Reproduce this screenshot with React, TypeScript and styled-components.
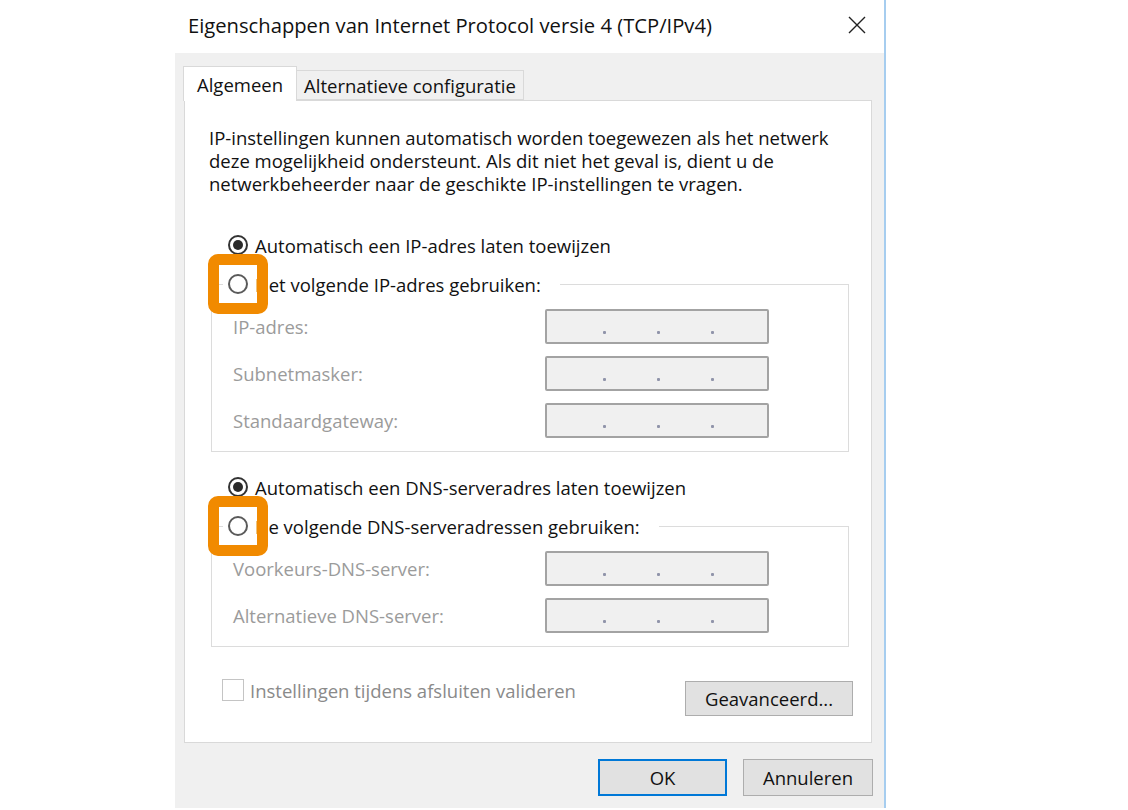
import React from "react";
import styled, { createGlobalStyle } from "styled-components";

const Global = createGlobalStyle`
  html, body { margin: 0; padding: 0; background: #ffffff; }
  body { font-family: "Open Sans", "Noto Sans", sans-serif; color: #111; }
  * { box-sizing: border-box; }
`;

const Page = styled.div`
  width: 1128px;
  height: 810px;
  display: flex;
  padding-left: 175px;
  overflow: hidden;
`;

const Dialog = styled.div`
  width: 711px;
  height: 808px;
  background: #f0f0f0;
  border-right: 2px solid #a6cdef;
  display: flex;
  flex-direction: column;
`;

const TitleBar = styled.div`
  height: 53px;
  flex: none;
  background: #ffffff;
  display: flex;
  align-items: center;
  justify-content: space-between;
  padding: 0 18px 3px 13px;
`;

const Title = styled.div`
  font-size: 20.2px;
  color: #111;
  white-space: nowrap;
`;

const CloseIcon = styled.svg`
  width: 18px;
  height: 18px;
  display: block;
`;

const Body = styled.div`
  padding: 13px 12px 0 9px;
  display: flex;
  flex-direction: column;
`;

const TabRow = styled.div`
  display: flex;
  align-items: flex-end;
  height: 34px;
  margin-left: -1px;
  position: relative;
  z-index: 1;
`;

const Tab = styled.div<{ $active?: boolean }>`
  height: ${(p) => (p.$active ? "35px" : "30px")};
  margin-bottom: ${(p) => (p.$active ? "-1px" : "0")};
  margin-left: ${(p) => (p.$active ? "0" : "-1px")};
  padding: 0 ${(p) => (p.$active ? "13px" : "7px")};
  background: ${(p) => (p.$active ? "#ffffff" : "#f0f0f0")};
  border: 1px solid #d9d9d9;
  border-bottom: ${(p) => (p.$active ? "none" : "1px solid #d9d9d9")};
  display: flex;
  align-items: center;
  font-size: 18.5px;
  white-space: nowrap;
  color: #111;
`;

const Panel = styled.div`
  height: 643px;
  background: #ffffff;
  border: 1px solid #d9d9d9;
  padding: 25px 18px 0 24px;
  display: flex;
  flex-direction: column;
`;

const Description = styled.p`
  margin: 0;
  font-size: 18.5px;
  line-height: 23px;
  white-space: nowrap;
  color: #111;
`;

const RadioRow = styled.label<{ $gap?: number }>`
  display: flex;
  align-items: center;
  height: 22px;
  margin-left: 19px;
  margin-top: ${(p) => p.$gap ?? 0}px;
  font-size: 18.5px;
  white-space: nowrap;
  color: #111;
`;

const RadioMark = styled.span<{ $checked?: boolean }>`
  position: relative;
  flex: none;
  width: 20px;
  height: 20px;
  margin-right: 7px;
  border-radius: 50%;
  border: 2px solid ${(p) => (p.$checked ? "#333" : "#5a5a5a")};
  background: #fff;
  display: flex;
  align-items: center;
  justify-content: center;
  &::after {
    content: "";
    display: ${(p) => (p.$checked ? "block" : "none")};
    width: 10px;
    height: 10px;
    border-radius: 50%;
    background: #2a2a2a;
  }
`;

const Highlight = styled.span`
  position: absolute;
  left: -22px;
  top: -22px;
  width: 60px;
  height: 60px;
  border: 11px solid #f18a00;
  border-radius: 10px;
  pointer-events: none;
`;

const GroupBox = styled.fieldset`
  margin: 17px 4px 0 2px;
  padding: 14px 0 13px 21px;
  border: 1px solid #dcdcdc;
  min-width: 0;
`;

const Legend = styled.legend`
  margin-left: -10px;
  padding: 0 19px 0 5px;
  height: 22px;
`;

const LegendRow = styled.span`
  display: flex;
  align-items: center;
  height: 22px;
  font-size: 18.5px;
  white-space: nowrap;
  color: #111;
`;

const FieldGrid = styled.div`
  display: grid;
  grid-template-columns: 312px 224px;
  grid-auto-rows: 35px;
  row-gap: 12px;
  align-items: center;
`;

const FieldLabel = styled.span`
  font-size: 18.5px;
  color: #9b9b9b;
  white-space: nowrap;
`;

const IpBox = styled.div`
  height: 35px;
  width: 224px;
  background: #f0f0f0;
  border: 2px solid #a3a3a3;
  border-radius: 2px;
  display: flex;
  align-items: center;
  padding-left: 56px;
  gap: 51px;
`;

const Dot = styled.span`
  width: 3px;
  height: 3px;
  margin-top: 11px;
  background: #9094aa;
  border-radius: 1px;
`;

const BottomRow = styled.div`
  margin-top: 33px;
  display: flex;
  justify-content: space-between;
  align-items: flex-start;
  padding-left: 13px;
`;

const CheckLabel = styled.label`
  display: flex;
  align-items: center;
  height: 22px;
  margin-top: -1px;
  font-size: 18.5px;
  color: #8a8a8a;
  white-space: nowrap;
`;

const CheckBox = styled.span`
  width: 22px;
  height: 22px;
  border: 1px solid #c4c4c4;
  background: #fff;
  margin-right: 6px;
  flex: none;
`;

const Button = styled.button<{ $w: number; $h?: number; $default?: boolean }>`
  width: ${(p) => p.$w}px;
  height: ${(p) => p.$h ?? 37}px;
  margin-top: ${(p) => (p.$h ? 1 : 0)}px;
  background: #e1e1e1;
  border: ${(p) => (p.$default ? "2px solid #0078d7" : "1px solid #adadad")};
  font-family: "Open Sans", "Noto Sans", sans-serif;
  font-size: 18.5px;
  color: #111;
  padding: 0;
  display: flex;
  align-items: center;
  justify-content: center;
`;

const Footer = styled.div`
  display: flex;
  justify-content: flex-end;
  gap: 16px;
  padding: 16px 0 0 0;
  margin-right: -1px;
`;

function IpField() {
  return (
    <IpBox>
      <Dot />
      <Dot />
      <Dot />
    </IpBox>
  );
}

export default function App() {
  return (
    <>
      <Global />
      <Page>
        <Dialog>
          <TitleBar>
            <Title>Eigenschappen van Internet Protocol versie 4 (TCP/IPv4)</Title>
            <CloseIcon viewBox="0 0 18 18">
              <path d="M1 1 L17 17 M17 1 L1 17" stroke="#222" strokeWidth="1.4" fill="none" />
            </CloseIcon>
          </TitleBar>
          <Body>
            <TabRow>
              <Tab $active>Algemeen</Tab>
              <Tab>Alternatieve configuratie</Tab>
            </TabRow>
            <Panel>
              <Description>
                IP-instellingen kunnen automatisch worden toegewezen als het netwerk
                <br />
                deze mogelijkheid ondersteunt. Als dit niet het geval is, dient u de
                <br />
                netwerkbeheerder naar de geschikte IP-instellingen te vragen.
              </Description>

              <RadioRow $gap={39}>
                <RadioMark $checked />
                Automatisch een IP-adres laten toewijzen
              </RadioRow>
              <GroupBox>
                <Legend>
                  <LegendRow>
                    <RadioMark>
                      <Highlight />
                    </RadioMark>
                    Het volgende IP-adres gebruiken:
                  </LegendRow>
                </Legend>
                <FieldGrid>
                  <FieldLabel>IP-adres:</FieldLabel>
                  <IpField />
                  <FieldLabel>Subnetmasker:</FieldLabel>
                  <IpField />
                  <FieldLabel>Standaardgateway:</FieldLabel>
                  <IpField />
                </FieldGrid>
              </GroupBox>

              <RadioRow $gap={24}>
                <RadioMark $checked />
                Automatisch een DNS-serveradres laten toewijzen
              </RadioRow>
              <GroupBox>
                <Legend>
                  <LegendRow>
                    <RadioMark>
                      <Highlight />
                    </RadioMark>
                    De volgende DNS-serveradressen gebruiken:
                  </LegendRow>
                </Legend>
                <FieldGrid>
                  <FieldLabel>Voorkeurs-DNS-server:</FieldLabel>
                  <IpField />
                  <FieldLabel>Alternatieve DNS-server:</FieldLabel>
                  <IpField />
                </FieldGrid>
              </GroupBox>

              <BottomRow>
                <CheckLabel>
                  <CheckBox />
                  Instellingen tijdens afsluiten valideren
                </CheckLabel>
                <Button $w={168} $h={35}>Geavanceerd...</Button>
              </BottomRow>
            </Panel>
            <Footer>
              <Button $w={129} $default>OK</Button>
              <Button $w={130}>Annuleren</Button>
            </Footer>
          </Body>
        </Dialog>
      </Page>
    </>
  );
}
